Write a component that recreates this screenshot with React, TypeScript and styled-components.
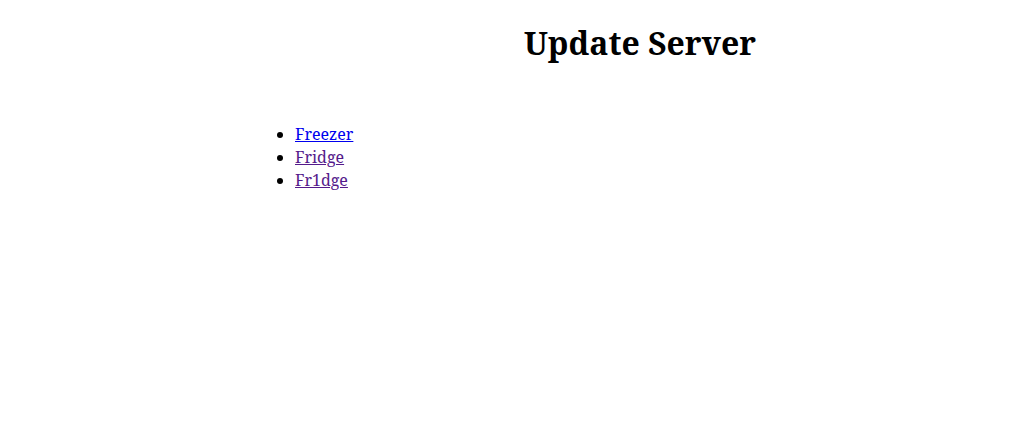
import React from 'react';
import styled, { createGlobalStyle } from 'styled-components';

const GlobalStyle = createGlobalStyle`
  body {
    margin: 8px;
    font-family: "Noto Serif", "DejaVu Serif", serif;
    background: #fff;
    color: #000;
  }
`;

const Page = styled.div`
  display: grid;
  grid-template-columns: 247px 1fr;
`;

const Main = styled.main`
  grid-column: 2;
`;

const Title = styled.h1`
  font-size: 32px;
  font-weight: bold;
  text-align: center;
  margin: 13px 0 59px;
  padding-left: 16px;
`;

const ServerList = styled.ul`
  margin: 0;
  padding-left: 40px;
`;

const Item = styled.li`
  line-height: 23px;
`;

const Link = styled.a<{ $visited?: boolean }>`
  color: ${(p) => (p.$visited ? '#551a8b' : '#0000ee')};
`;

export default function App() {
  return (
    <>
      <GlobalStyle />
      <Page>
        <Main>
          <Title>Update Server</Title>
          <ServerList>
            <Item><Link href="#freezer">Freezer</Link></Item>
            <Item><Link href="#fridge" $visited>Fridge</Link></Item>
            <Item><Link href="#fr1dge" $visited>Fr1dge</Link></Item>
          </ServerList>
        </Main>
      </Page>
    </>
  );
}
